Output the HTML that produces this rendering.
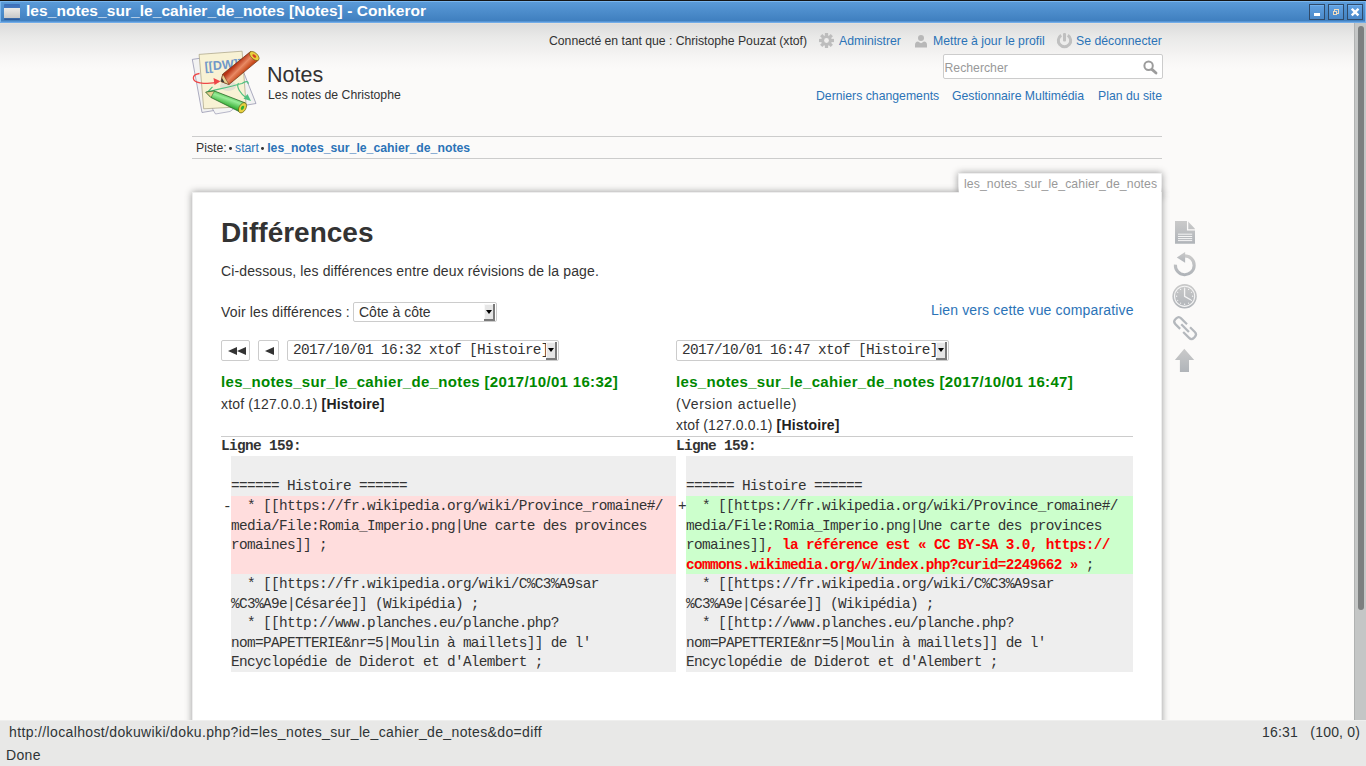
<!DOCTYPE html>
<html><head><meta charset="utf-8">
<style>
*{box-sizing:border-box}
html,body{margin:0;padding:0}
body{width:1366px;height:766px;overflow:hidden;position:relative;font-family:"Liberation Sans",sans-serif;color:#333;background:#fbfaf9}
.abs{position:absolute;white-space:nowrap}
#tb{position:absolute;left:0;top:0;width:1366px;height:23px;background:linear-gradient(#151515 0,#151515 1px,#7ab6ee 1px,#7ab6ee 2px,#5a9ad8 2px,#3f7fbf 21px,#6aa8e8 22px,#7ab0e8 23px)}
#tbicon{position:absolute;left:4px;top:4px;width:16px;height:15px;border-radius:1px;background:linear-gradient(#3e6fb8 0,#4478c0 4.5px,#ebe9e6 4.5px,#c8c8c8 14px,#3a6aa8 14px);box-shadow:0 1px 0 #2d5a99}
#tbtitle{position:absolute;left:26px;top:1px;letter-spacing:0.06px;font:bold 15.5px/20px "Liberation Sans",sans-serif;color:#fff;white-space:nowrap}
.wbtn{position:absolute;top:4px;width:16px;height:16px;border:1px solid #2f4a6a;border-radius:0;background:linear-gradient(#62a2e2,#4a88c8);box-shadow:inset 0 1px 0 #70b0ee}
#vp{position:absolute;left:0;top:23px;width:1354px;height:697px;background:linear-gradient(#e4e0da 0,#e4e0da 1px,#dcdcdc 1px,#e9e9e8 14px,#f2f1f0 28px,#f8f7f6 38px,#fbfaf9 46px,#fbfaf9 100%);overflow:hidden}
#sb{position:absolute;left:1354px;top:23px;width:12px;height:697px;background:#c4c6c6;border-left:1px solid #b0b2b2}
#sbthumb{position:absolute;left:3px;top:3px;width:6px;height:584px;border-radius:3px;background:#7c7f80}
#status{position:absolute;left:0;top:720px;width:1366px;height:46px;background:linear-gradient(#efefee 0,#efefee 1px,#e8e8e7 1px);color:#2e3436}
a{color:#2b73b7;text-decoration:none}
.ut{font-size:12.25px;line-height:16px}
.mono{font-family:"Liberation Mono",monospace}
#page{position:absolute;left:192px;top:192px;width:970px;height:600px;background:#fff;border:1px solid #eee;box-shadow:0 0 7px #999}
#tab{position:absolute;left:958px;top:173px;width:204px;height:24px;background:#fff;border:1px solid #eee;box-shadow:0 0 7px #999}
#tabcover{position:absolute;left:959px;top:174px;width:202px;height:29px;background:#fff}
.sel{position:absolute;background:#fff;border:1px solid #ccc;border-radius:2px;white-space:nowrap}
.sel span{position:absolute;top:0;font-size:14px;line-height:18px}
.sel.mono span{font-size:14.4px;letter-spacing:-0.64px;line-height:19px}
.sel i{position:absolute;right:1px;top:1px;bottom:0px;width:11px;background:#e6e6e6;border-right:2px solid #7a7a7a;border-bottom:2px solid #7a7a7a;box-shadow:inset 1px 1px 0 #f8f8f8}
.sel i:after{content:"";position:absolute;left:2px;top:6px;border-left:3px solid transparent;border-right:3px solid transparent;border-top:4px solid #000}
.btn{position:absolute;height:21px;background:#fff;border:1px solid #ccc;border-radius:2px}
.tri{position:absolute;top:6px;width:0;height:0;border-top:4px solid transparent;border-bottom:4px solid transparent;border-right:9px solid #333}
.gt{font:bold 15px/18px "Liberation Sans",sans-serif;color:#080;letter-spacing:0.33px}
.th14{font:14px/18px "Liberation Sans",sans-serif;color:#333;letter-spacing:0.15px}
.dl{font-family:"Liberation Mono",monospace;font-size:14.4px;letter-spacing:-0.64px;line-height:19.6px;color:#333;white-space:pre}
.dl strong{color:#f00;font-weight:bold}
.st{font:14px/18px "Liberation Sans",sans-serif;color:#2e3436;letter-spacing:0.36px}
</style></head><body>
<div id="tb"><i style="position:absolute;left:0;top:1px;width:1px;height:21px;background:#7ab6ee"></i><i style="position:absolute;right:0;top:1px;width:1px;height:21px;background:#7ab6ee"></i><div id="tbicon"></div><div id="tbtitle">les_notes_sur_le_cahier_de_notes [Notes] - Conkeror</div>
<div class="wbtn" style="left:1309px"><i style="position:absolute;left:4px;top:8px;width:6px;height:3px;background:#fff"></i></div>
<div class="wbtn" style="left:1328px"><svg width="16" height="16" style="position:absolute;left:-1px;top:-1px"><rect x="6.5" y="5.5" width="4" height="4" fill="none" stroke="#f0dcc0" stroke-width="1"/><rect x="5.5" y="7.5" width="3" height="3" fill="#4a88c8" stroke="#f0dcc0" stroke-width="1"/></svg></div>
<div class="wbtn" style="left:1347px"><svg width="16" height="16" style="position:absolute;left:-1px;top:-1px"><path d="M5.6 5.6 L10.6 10.6 M10.6 5.6 L5.6 10.6" stroke="#fff" stroke-width="2.4" stroke-linecap="square"/></svg></div>
</div>
<div id="vp"></div>
<div id="sb"><div id="sbthumb"></div></div>

<!-- header -->
<div class="abs ut" style="left:549px;top:33px;letter-spacing:-0.03px">Connecté en tant que : Christophe Pouzat (xtof)</div>
<div class="abs ut" style="left:839px;top:33px"><a>Administrer</a></div>
<div class="abs ut" style="left:933px;top:33px"><a>Mettre à jour le profil</a></div>
<div class="abs ut" style="left:1076px;top:33px"><a>Se déconnecter</a></div>


<svg class="abs" style="left:818px;top:32px" width="17" height="17" viewBox="0 0 17 17"><g fill="#bdbdbd" transform="translate(8.5 8.5)"><rect x="-1.6" y="-7.5" width="3.2" height="15"/><rect x="-7.5" y="-1.6" width="15" height="3.2"/><rect x="-1.6" y="-7.5" width="3.2" height="15" transform="rotate(45)"/><rect x="-1.6" y="-7.5" width="3.2" height="15" transform="rotate(-45)"/><circle r="5.3"/></g><circle cx="8.5" cy="8.5" r="2.4" fill="#efeeed"/></svg>
<svg class="abs" style="left:914px;top:34px" width="14" height="15" viewBox="0 0 14 15"><circle cx="7" cy="4" r="3" fill="#b8b8b8"/><path d="M1 13.5 L1 11 Q1 8 4 7.6 L7 9.2 L10 7.6 Q13 8 13 11 L13 13.5 Z" fill="#b8b8b8"/></svg>
<svg class="abs" style="left:1056px;top:32px" width="17" height="17" viewBox="0 0 17 17"><path d="M5.2 3.3 A6.2 6.2 0 1 0 11.8 3.3" fill="none" stroke="#c0c0c0" stroke-width="3"/><rect x="7" y="1" width="3" height="8.5" rx="1" fill="#c0c0c0"/></svg>
<div class="abs" style="left:943px;top:54px;width:220px;height:25px;background:#fff;border:1px solid #ccc;border-radius:2px"></div>
<div class="abs" style="left:944.5px;top:61px;font-size:12.25px;color:#999">Rechercher</div>
<svg class="abs" style="left:1140px;top:58px" width="20" height="20" viewBox="0 0 20 20"><circle cx="8.6" cy="7.8" r="4.2" fill="none" stroke="#9c9c9c" stroke-width="2"/><path d="M12 11.4 L16 15" stroke="#9c9c9c" stroke-width="2.8" stroke-linecap="round"/></svg>


<svg class="abs" style="left:190px;top:48px" width="70" height="70" viewBox="0 0 70 70">
<defs>
<linearGradient id="rp" gradientUnits="userSpaceOnUse" x1="40" y1="10" x2="60" y2="30"><stop offset="0.3" stop-color="#b83414"/><stop offset="0.5" stop-color="#e88a64"/><stop offset="0.7" stop-color="#c84a1c"/></linearGradient>
<linearGradient id="gp" gradientUnits="userSpaceOnUse" x1="38" y1="44" x2="33" y2="58"><stop offset="0" stop-color="#28a828"/><stop offset="0.45" stop-color="#98ec98"/><stop offset="1" stop-color="#20a020"/></linearGradient>
</defs>
<polygon points="2.3,11.4 46,5 66,55.5 12,64.5" fill="#f2f2f2" stroke="#8a8aa8" stroke-width="0.7"/>
<polygon points="22,60 50,56 40,63.5 25.5,66" fill="#f4f4f4" stroke="#8a8aa8" stroke-width="0.6"/>
<polygon points="9.1,6.4 52.1,3.2 56.2,58.5 13.7,60.8" fill="#f8f2d4" stroke="#a8a080" stroke-width="0.7"/>
<ellipse cx="38" cy="38" rx="8" ry="5" fill="#d8d8d0" opacity="0.7"/>
<text x="14.5" y="21.5" font-family="Liberation Sans" font-weight="bold" font-size="12.5" fill="#7098c8" transform="rotate(-5 30 17)">[[DW]]</text>
<path d="M9.5 25.5 C1.5 26.5 1 33.5 10 34.8 C17 35.8 24 35.2 29 33.5" fill="none" stroke="#ee4848" stroke-width="1.3"/>
<path d="M23.5 30 L30.5 33.2 L24.5 37 Z" fill="#ee4848"/>
<path d="M58 36 C59 33 55.5 33 52 35.5 C41 38.5 29 41 18.5 43.5 M22.5 38.8 L18 43.6 L23.5 45.2 M48.5 35.2 C46 38.5 50 45.5 57 50.5" fill="none" stroke="#50c080" stroke-width="1.2"/>
<path d="M53.5 50.8 L61 53 L57.5 46 Z" fill="#50c080"/>
<path d="M60.5 3.6 L68.2 12.3 L39 36.5 L31 33.5 L32.8 26 Z" fill="url(#rp)" stroke="#6a2a10" stroke-width="0.7"/>
<path d="M31 33.5 L32.8 26 L39 36.5 Z" fill="#e8d090" stroke="#6a2a10" stroke-width="0.5"/>
<path d="M31 33.5 L32 30 L34.5 34.5 Z" fill="#333"/>
<ellipse cx="64.3" cy="8" rx="3.2" ry="5.8" transform="rotate(-48 64.3 8)" fill="#e8d040" stroke="#6a4a10" stroke-width="0.6"/>
<ellipse cx="64.3" cy="8" rx="1.2" ry="2.2" transform="rotate(-48 64.3 8)" fill="#d84020"/>
<path d="M15.8 44.2 L24.5 43 L55.5 55 L51 64.5 L21 49.5 Z" fill="url(#gp)" stroke="#1a5a1a" stroke-width="0.7"/>
<path d="M15.8 44.2 L24.5 43 L21 49.5 Z" fill="#e8d090" stroke="#1a5a1a" stroke-width="0.5"/>
<ellipse cx="52.5" cy="59.8" rx="3.4" ry="5.6" transform="rotate(30 52.5 59.8)" fill="#e8d040" stroke="#5a5a10" stroke-width="0.6"/>
<ellipse cx="52.5" cy="59.8" rx="1.4" ry="2.3" transform="rotate(30 52.5 59.8)" fill="#30b030"/>
</svg>
<div class="abs" style="left:267px;top:62.5px;font-size:21.5px;line-height:24px">Notes</div>
<div class="abs" style="left:268px;top:87px;font-size:12.25px;line-height:16px">Les notes de Christophe</div>

<div class="abs ut" style="left:816px;top:88px"><a>Derniers changements</a></div>
<div class="abs ut" style="left:952px;top:88px"><a>Gestionnaire Multimédia</a></div>
<div class="abs ut" style="left:1098px;top:88px"><a>Plan du site</a></div>

<div class="abs" style="left:192px;top:136px;width:970px;height:1px;background:#ccc"></div>
<div class="abs" style="left:192px;top:158px;width:970px;height:1px;background:#ccc"></div>
<div class="abs ut" style="left:196px;top:140px">Piste:</div>
<div class="abs" style="left:229.2px;top:147.2px;width:2.8px;height:2.8px;border-radius:50%;background:#333"></div>
<div class="abs ut" style="left:235px;top:140px"><a>start</a></div>
<div class="abs" style="left:261.2px;top:147.2px;width:2.8px;height:2.8px;border-radius:50%;background:#333"></div>
<div class="abs ut" style="left:267.2px;top:140px"><a style="font-weight:bold">les_notes_sur_le_cahier_de_notes</a></div>

<div id="tab"></div>
<div id="page"></div>
<div id="tabcover"></div>
<div class="abs" style="left:964px;top:177px;font-size:12.25px;letter-spacing:0.1px;color:#999">les_notes_sur_le_cahier_de_notes</div>


<!-- page content -->
<div class="abs" style="left:221px;top:217px;font:bold 28px/32px 'Liberation Sans',sans-serif;color:#333">Différences</div>
<div class="abs" style="left:221px;top:262px;letter-spacing:0.13px;font:14px/18px 'Liberation Sans',sans-serif">Ci-dessous, les différences entre deux révisions de la page.</div>
<div class="abs" style="left:221px;top:303px;letter-spacing:0.14px;font:14px/18px 'Liberation Sans',sans-serif">Voir les différences :</div>
<div class="sel" style="left:353px;top:302px;width:144px;height:20px"><span style="left:5px">Côte à côte</span><i></i></div>
<div class="abs" style="right:232.4px;top:301px;letter-spacing:0.16px;font:14px/18px 'Liberation Sans',sans-serif"><a>Lien vers cette vue comparative</a></div>

<div class="btn" style="left:221px;top:340px;width:29px"><b class="tri" style="left:6px"></b><b class="tri" style="left:14.6px"></b></div>
<div class="btn" style="left:258px;top:340px;width:21px"><b class="tri" style="left:6px"></b></div>
<div class="sel mono" style="left:287px;top:340px;width:272px;height:21px"><span style="left:5px">2017/10/01 16:32 xtof [Histoire]</span><i></i></div>
<div class="sel mono" style="left:676px;top:340px;width:273px;height:21px"><span style="left:5px">2017/10/01 16:47 xtof [Histoire]</span><i></i></div>

<div class="abs gt" style="left:221px;top:373px">les_notes_sur_le_cahier_de_notes [2017/10/01 16:32]</div>
<div class="abs th14" style="left:221px;top:395px">xtof (127.0.0.1) <b style="color:#222">[Histoire]</b></div>
<div class="abs gt" style="left:676px;top:373px">les_notes_sur_le_cahier_de_notes [2017/10/01 16:47]</div>
<div class="abs th14" style="left:676px;top:395px;letter-spacing:0.72px">(Version actuelle)</div>
<div class="abs th14" style="left:676px;top:416px">xtof (127.0.0.1) <b style="color:#222">[Histoire]</b></div>
<div class="abs" style="left:221px;top:436px;width:912px;height:1px;background:#ccc"></div>
<div class="abs dl" style="left:221px;top:437px;font-weight:bold">Ligne 159:</div>
<div class="abs dl" style="left:676px;top:437px;font-weight:bold">Ligne 159:</div>

<div class="abs" style="left:231px;top:456px;width:445px;height:40px;background:#eee"></div>
<div class="abs" style="left:686px;top:456px;width:447px;height:40px;background:#eee"></div>
<div class="abs" style="left:231px;top:496px;width:445px;height:78px;background:#fdd"></div>
<div class="abs" style="left:686px;top:496px;width:447px;height:78px;background:#cfc"></div>
<div class="abs" style="left:231px;top:574px;width:445px;height:98px;background:#eee"></div>
<div class="abs" style="left:686px;top:574px;width:447px;height:98px;background:#eee"></div>

<div class="abs dl" style="left:231px;top:477px">====== Histoire ======</div>
<div class="abs dl" style="left:686px;top:477px">====== Histoire ======</div>
<div class="abs dl" style="left:223px;top:497.5px">-</div>
<div class="abs dl" style="left:678px;top:497px">+</div>
<div class="abs dl" style="left:231px;top:497px">  * [[https://fr.wikipedia.org/wiki/Province_romaine#/<br>media/File:Romia_Imperio.png|Une carte des provinces<br>romaines]] ;</div>
<div class="abs dl" style="left:686px;top:497px">  * [[https://fr.wikipedia.org/wiki/Province_romaine#/<br>media/File:Romia_Imperio.png|Une carte des provinces<br>romaines]]<strong>, la référence est « CC BY-SA 3.0, https://</strong><br><strong>commons.wikimedia.org/w/index.php?curid=2249662 »</strong> ;</div>
<div class="abs dl" style="left:231px;top:575px">  * [[https://fr.wikipedia.org/wiki/C%C3%A9sar<br>%C3%A9e|Césarée]] (Wikipédia) ;<br>  * [[http://www.planches.eu/planche.php?<br>nom=PAPETTERIE&amp;nr=5|Moulin à maillets]] de l'<br>Encyclopédie de Diderot et d'Alembert ;</div>
<div class="abs dl" style="left:686px;top:575px">  * [[https://fr.wikipedia.org/wiki/C%C3%A9sar<br>%C3%A9e|Césarée]] (Wikipédia) ;<br>  * [[http://www.planches.eu/planche.php?<br>nom=PAPETTERIE&amp;nr=5|Moulin à maillets]] de l'<br>Encyclopédie de Diderot et d'Alembert ;</div>

<!-- status -->

<svg class="abs" style="left:1170px;top:216px" width="32" height="162" viewBox="0 0 32 162">
<defs><linearGradient id="g1" x1="0" y1="0" x2="0" y2="1"><stop offset="0" stop-color="#cacaca"/><stop offset="1" stop-color="#b0b4b9"/></linearGradient></defs>
<path d="M5 5 H17.6 L25 12.8 V27.8 H5 Z" fill="url(#g1)"/>
<path d="M17.6 5 V13.8 H25" fill="none" stroke="#fbfaf9" stroke-width="1.3"/>
<path d="M8 18.2 H22.2 M8 20.5 H22.2 M8 22.6 H22.2 M8 24.6 H22.2" stroke="#f4f4f4" stroke-width="1"/>
<path d="M5.4 48.6 A9.4 9.4 0 1 0 14.7 39.9" fill="none" stroke="url(#g1)" stroke-width="3.1"/>
<path d="M6.8 41.4 L15.1 36 L15.1 46.8 Z" fill="url(#g1)"/>
<circle cx="14.6" cy="80.3" r="12.2" fill="url(#g1)"/>
<circle cx="14.6" cy="80.3" r="10.1" fill="none" stroke="#f4f4f4" stroke-width="1.1"/>
<g fill="#f4f4f4"><circle cx="14.6" cy="72.3" r="0.7"/><circle cx="14.6" cy="88.3" r="0.7"/><circle cx="6.6" cy="80.3" r="0.7"/><circle cx="22.6" cy="80.3" r="0.7"/><circle cx="18.6" cy="73.4" r="0.6"/><circle cx="21.5" cy="76.3" r="0.6"/><circle cx="21.5" cy="84.3" r="0.6"/><circle cx="18.6" cy="87.2" r="0.6"/><circle cx="10.6" cy="87.2" r="0.6"/><circle cx="7.7" cy="84.3" r="0.6"/><circle cx="7.7" cy="76.3" r="0.6"/><circle cx="10.6" cy="73.4" r="0.6"/></g>
<path d="M14.6 72.8 V80.3 L21 84" fill="none" stroke="#f4f4f4" stroke-width="1.3"/>
<g fill="none" stroke="#b4b8bd" stroke-width="1.95" transform="translate(15.1 112.1) rotate(45) scale(1.13)"><path d="M-1.2 -3.6 H-8.6 Q-11.6 -3.6 -11.6 -0.6 V0.6 Q-11.6 3.6 -8.6 3.6 H-2.6"/><path d="M1.2 3.6 H8.6 Q11.6 3.6 11.6 0.6 V-0.6 Q11.6 -3.6 8.6 -3.6 H2.6"/><path d="M-4.8 0 H4.8" stroke-width="2"/></g>
<path d="M14.3 132.8 L24.2 144 H19 V156 H9.9 V144 H4.9 Z" fill="url(#g1)"/>
</svg>
<div id="status"><div class="abs st" style="left:9px;top:3px">http://localhost/dokuwiki/doku.php?id=les_notes_sur_le_cahier_de_notes&amp;do=diff</div><div class="abs st" style="left:6px;top:26px">Done</div><div class="abs st" style="left:1262px;top:3px;letter-spacing:0.2px">16:31&nbsp;&nbsp;&nbsp;(100, 0)</div></div>
</body></html>
